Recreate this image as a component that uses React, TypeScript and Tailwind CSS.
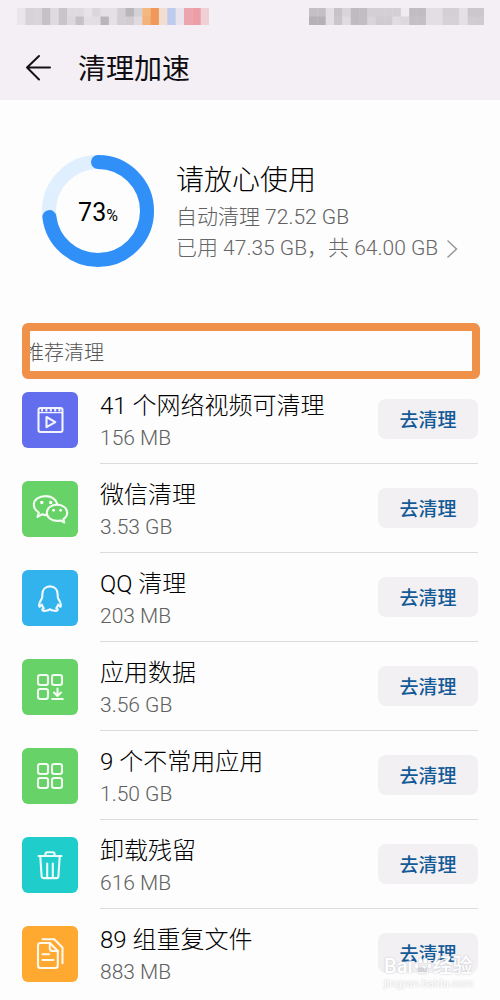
import type { ReactNode } from 'react';

type Item = { title: string; size: string; tile: string; icon: ReactNode };

const LEFT_BLOCKS: [string, string][] = [
  ['#e9e5ea', '#e9e5ea'], ['#d6d2d7', '#d6d2d7'], ['#d8d4d9', '#d8d4d9'], ['#c5c1c6', '#c5c1c6'],
  ['#dedadf', '#dedadf'], ['#c8c4c9', '#c8c4c9'], ['#dedadf', '#dcd8dd'], ['#dedadf', '#c5c1c6'],
  ['#e6e2e7', '#e2dee3'], ['#dad6db', '#e2dee3'], ['#e4e0e5', '#b9b5ba'], ['#e4e0e5', '#e4e0e5'],
  ['#d2ced3', '#d2ced3'], ['#b9b5ba', '#d0ccd1'], ['#d2d1d6', '#dedade'], ['#f5b880', '#f3b27a'],
  ['#f0995a', '#f0995a'], ['#f3dcd2', '#f3dcd2'], ['#bccbee', '#bccbee'], ['#e9e3ee', '#e9e3ee'],
  ['#eda5ad', '#eda5ad'], ['#ec9da5', '#ec9da5'], ['#efd0d5', '#efd0d5'],
];

const RIGHT_BLOCKS: [string, string][] = [
  ['#c3bfc4', '#b5b1b6'], ['#c3bfc4', '#b5b1b6'], ['#e2dee3', '#e2dee3'], ['#c6c2c7', '#c9c5ca'],
  ['#d8d4d9', '#dfdbe0'], ['#bfbbc0', '#bfbbc0'], ['#c1bdc2', '#c1bdc2'], ['#d3cfd4', '#d8d4d9'],
  ['#d3cfd4', '#cfcbd0'], ['#d3cfd4', '#cfcbd0'], ['#d3cfd4', '#e0dce1'], ['#efebf0', '#dcd8dd'],
  ['#c0bcc1', '#c3bfc4'], ['#c0bcc1', '#c3bfc4'], ['#e2dee3', '#e2dee3'], ['#e2dee3', '#e2dee3'],
  ['#d3cfd4', '#d5d1d6'], ['#d3cfd4', '#d5d1d6'], ['#e4e0e5', '#e4e0e5'], ['#cbc7cc', '#d0ccd1'],
  ['#cbc7cc', '#cfcbd0'],
];

function Mosaic({ blocks }: { blocks: [string, string][] }) {
  const w = 8.35;
  return (
    <svg className="h-[17px]" width={Math.round(blocks.length * w)} height="17" aria-hidden="true">
      {blocks.map(([top, bottom], i) => (
        <g key={i}>
          <rect x={i * w} y="0" width={w + 0.3} height="9" fill={top} />
          <rect x={i * w} y="8.5" width={w + 0.3} height="8.5" fill={bottom} />
        </g>
      ))}
    </svg>
  );
}

function Glyph({ children }: { children: ReactNode }) {
  return (
    <svg
      viewBox="0 0 56 56"
      className="size-14"
      fill="none"
      stroke="#fff"
      strokeOpacity="0.92"
      strokeWidth="2.1"
      strokeLinecap="round"
      strokeLinejoin="round"
      aria-hidden="true"
    >
      {children}
    </svg>
  );
}

const VideoIcon = (
  <Glyph>
    <rect x="16.5" y="16" width="24" height="24" rx="2" />
    <path d="M17 20.6H40" strokeWidth="1.2" />
    <path d="M19 18.2h2M23.4 18.2h2M27.8 18.2h2M32.2 18.2h2M36.4 18.2h2" strokeWidth="2.4" strokeLinecap="butt" />
    <path d="M24.5 25v10.2l8.8-5.1z" />
  </Glyph>
);

const WechatIcon = (
  <Glyph>
    <path d="M24.6 34.2c-1.8 0-3.2-.3-4.7-.9l-4.4 2.6 1.3-4.4c-3-2-5-4.6-5-7.8 0-5.200 5.400-8.600 11.800-8.600 6 0 10.600 3.200 11.600 7.800" />
    <path d="M35 23.600c5.800 0 10.200 3.600 10.200 8.200 0 2.600-1.500 4.800-3.800 6.300l.9 3.500-3.800-2.200c-1.100.3-2.300.5-3.500.5-5.700 0-10.200-3.600-10.200-8.100s4.500-8.200 10.200-8.200z" />
    <g fill="#fff" stroke="none">
      <circle cx="19.800" cy="21.500" r="1.700" />
      <circle cx="28.700" cy="21.500" r="1.700" />
      <circle cx="31.600" cy="29.300" r="1.400" />
      <circle cx="38.600" cy="29.300" r="1.400" />
    </g>
  </Glyph>
);

const QqIcon = (
  <Glyph>
    <path d="M28 16.400c-4.800 0-7.700 3.400-7.700 8.100 0 1.700.1 2.700-.3 3.700-1.500 2.400-2.900 4.600-2.900 7.400 0 1 .4 1.300 1 .8l1.700-1.800c.5 1.700 1.100 2.700 2 3.600-1.300.5-1.800 1.200-1.400 1.900.8 1.200 5.800.9 7.600-.9 1.800 1.800 6.800 2.100 7.600.9.400-.7-.1-1.400-1.400-1.900.9-.9 1.500-1.900 2-3.600l1.700 1.800c.6.5 1 .2 1-.8 0-2.800-1.400-5-2.900-7.400-.4-1-.3-2-.3-3.700 0-4.700-2.900-8.100-7.700-8.100z" />
  </Glyph>
);

const AppDataIcon = (
  <Glyph>
    <rect x="16" y="16" width="10" height="10" rx="2.200" />
    <rect x="30" y="16" width="10" height="10" rx="2.200" />
    <rect x="16" y="30" width="10" height="10" rx="2.200" />
    <path d="M35.500 29.500v7M32 33.500l3.500 3.600 3.500-3.600M30.200 40h10.600" />
  </Glyph>
);

const AppsIcon = (
  <Glyph>
    <rect x="16" y="16" width="10" height="10" rx="2.200" />
    <rect x="30" y="16" width="10" height="10" rx="2.200" />
    <rect x="16" y="30" width="10" height="10" rx="2.200" />
    <rect x="30" y="30" width="10" height="10" rx="2.200" />
  </Glyph>
);

const TrashIcon = (
  <Glyph>
    <path d="M16.500 19h23M23.500 18.500v-1.700c0-1 .7-1.600 1.600-1.600h5.800c.9 0 1.600.6 1.600 1.600v1.700" />
    <path d="M18.300 19.500l1.300 19.800c.1 1.200.8 1.800 2 1.800h12.800c1.200 0 1.900-.6 2-1.800l1.300-19.800M25.200 26.500v14M30.800 26.500v14" />
  </Glyph>
);

const FilesIcon = (
  <Glyph>
    <path d="M27.800 17H18.500c-1.600 0-2.500.9-2.500 2.500v20c0 1.600.9 2.500 2.500 2.500h14.800c1.600 0 2.500-.9 2.500-2.500V25z" />
    <path d="M27.800 17.300v5.200c0 1.600.9 2.500 2.500 2.500h5.200" />
    <path d="M20.500 13.300h11.700l8.300 8.300v15.600M20.500 28.300h6.500M20.500 34h11" />
  </Glyph>
);

const ITEMS: Item[] = [
  { title: '41 个网络视频可清理', size: '156 MB', tile: 'bg-[#626eee]', icon: VideoIcon },
  { title: '微信清理', size: '3.53 GB', tile: 'bg-[#66d267]', icon: WechatIcon },
  { title: 'QQ 清理', size: '203 MB', tile: 'bg-[#33b3ee]', icon: QqIcon },
  { title: '应用数据', size: '3.56 GB', tile: 'bg-[#66d267]', icon: AppDataIcon },
  { title: '9 个不常用应用', size: '1.50 GB', tile: 'bg-[#66d267]', icon: AppsIcon },
  { title: '卸载残留', size: '616 MB', tile: 'bg-[#1fcdca]', icon: TrashIcon },
  { title: '89 组重复文件', size: '883 MB', tile: 'bg-[#ffa931]', icon: FilesIcon },
];

function UsageRing({ percent }: { percent: number }) {
  return (
    <div className="grid size-28 shrink-0 place-items-center">
      <svg viewBox="0 0 112 112" className="col-start-1 row-start-1 size-28" fill="none" strokeWidth="14" aria-hidden="true">
        <circle cx="56" cy="56" r="49" stroke="#e0effd" />
        <circle
          cx="56"
          cy="56"
          r="49"
          stroke="#3090f8"
          strokeLinecap="round"
          pathLength={100}
          strokeDasharray={`${percent} 100`}
          transform="rotate(-90 56 56)"
        />
      </svg>
      <p className="col-start-1 row-start-1 pt-1 text-[25px] leading-8 text-black">
        {percent}
        <span className="text-base">%</span>
      </p>
    </div>
  );
}

function Row({ item }: { item: Item }) {
  return (
    <li className="group flex h-[89px] items-center gap-[22px]">
      <div className={`size-14 shrink-0 rounded-md ${item.tile}`}>{item.icon}</div>
      <div className="flex h-full min-w-0 flex-1 items-center justify-between border-b border-[#dcdcde] group-last:border-transparent">
        <div className="min-w-0 pt-0.5">
          <h3 className="truncate text-2xl leading-9 font-light text-black">{item.title}</h3>
          <p className="text-[21px] leading-7 font-light text-[#606060]">{item.size}</p>
        </div>
        <button
          type="button"
          aria-label={`去清理 ${item.title}`}
          className="h-10 w-25 shrink-0 rounded-lg bg-[#f2f0f3] pt-1 text-[19px] font-medium text-[#135a96]"
        >
          去清理
        </button>
      </div>
    </li>
  );
}

export default function App() {
  return (
    <div className="relative min-h-screen overflow-hidden bg-[#fdfdfd] font-['Roboto','Noto_Sans_CJK_SC',sans-serif]">
      <header className="h-25 bg-[#f3eff4] pt-2">
        <div className="flex justify-between pr-4 pl-[17px]">
          <Mosaic blocks={LEFT_BLOCKS} />
          <Mosaic blocks={RIGHT_BLOCKS} />
        </div>
        <div className="flex items-center gap-6 pt-5 pl-6">
          <button type="button" aria-label="返回">
            <svg viewBox="0 0 30 30" className="size-[30px]" fill="none" stroke="#151217" strokeWidth="2" strokeLinecap="round" strokeLinejoin="round" aria-hidden="true">
              <path d="M26 14.500H3M15 3L3 14.500 15 26.500" />
            </svg>
          </button>
          <h1 className="pt-1 text-[28px] leading-[42px] text-[#100d12]">清理加速</h1>
        </div>
      </header>

      <main className="px-[22px] pt-[55px]">
        <section className="flex items-center gap-[22px] pl-5">
          <UsageRing percent={73} />
          <div className="pt-0.5">
            <h2 className="text-[28px] leading-[42px] font-light text-black">请放心使用</h2>
            <p className="text-[21px] leading-[31px] font-light text-[#606060]">自动清理 72.52 GB</p>
            <a href="#storage" className="flex items-center gap-2 text-[21px] leading-[31px] font-light whitespace-nowrap text-[#666]">
              已用 47.35 GB，共 64.00 GB
              <svg viewBox="0 0 12 20" className="h-5 w-3" fill="none" stroke="#999" strokeWidth="1.500" aria-hidden="true">
                <path d="M1.500 1.500L10.500 10 1.500 18.500" />
              </svg>
            </a>
          </div>
        </section>

        <section>
          <div className="-mr-0.5 mt-14 h-14 overflow-hidden rounded-md border-8 border-[#f0914a] bg-[#fdfdfd]">
            <h2 className="-ml-1.5 text-xl leading-11 font-light text-[#555]">推荐清理</h2>
          </div>
          <ul className="-mt-1">
            {ITEMS.map((item) => (
              <Row key={item.title} item={item} />
            ))}
          </ul>
        </section>
      </main>

      <div className="pointer-events-none absolute right-6 bottom-2 w-[92px] text-white [text-shadow:0_0_2px_#bdbdc4]">
        <p className="flex items-center text-xl leading-5 font-medium whitespace-nowrap">
          Bai
          <span className="grid size-5 place-items-center">
            <svg viewBox="0 0 20 20" className="col-start-1 row-start-1 size-5" fill="#fff" stroke="#d5d5da" strokeWidth="0.600" aria-hidden="true">
              <ellipse cx="3.500" cy="10" rx="2" ry="2.800" />
              <ellipse cx="7.500" cy="5" rx="2" ry="3" />
              <ellipse cx="12.500" cy="5" rx="2" ry="3" />
              <ellipse cx="16.500" cy="10" rx="2" ry="2.800" />
              <path d="M10 9c-2 0-3 2-4.500 3.500S4 18 7 18h6c3 0 3-4 1.500-5.500S12 9 10 9z" />
            </svg>
            <span className="col-start-1 row-start-1 pt-2 text-[8px] leading-3 text-[#c8c8ce]">du</span>
          </span>
          经验
        </p>
        <p className="text-[11px] leading-4 whitespace-nowrap">jingyan.baidu.com</p>
      </div>
    </div>
  );
}
